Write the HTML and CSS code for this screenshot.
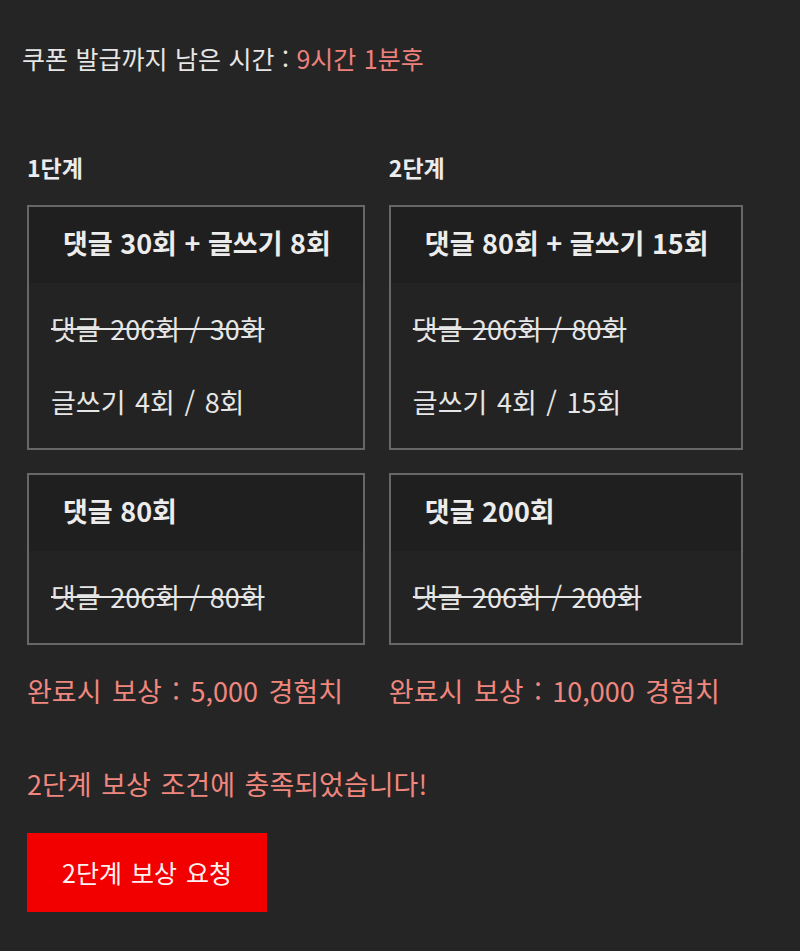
FILE: index.html
```html
<!DOCTYPE html>
<html lang="ko">
<head>
<meta charset="utf-8">
<link rel="stylesheet" href="styles.css">
</head>
<body>
<div class="page">
  <p class="timer">쿠폰 발급까지 남은 시간 : <span class="accent">9시간 1분후</span></p>
  <div class="stages">
    <div class="stage">
      <div class="stage-label">1단계</div>
      <div class="card">
        <div class="card-head">댓글 30회 + 글쓰기 8회</div>
        <div class="card-body">
          <div class="line done">댓글 206회 / 30회</div>
          <div class="line">글쓰기 4회 / 8회</div>
        </div>
      </div>
      <div class="card">
        <div class="card-head">댓글 80회</div>
        <div class="card-body">
          <div class="line done">댓글 206회 / 80회</div>
        </div>
      </div>
      <div class="reward">완료시 보상 : 5,000 경험치</div>
    </div>
    <div class="stage">
      <div class="stage-label">2단계</div>
      <div class="card">
        <div class="card-head">댓글 80회 + 글쓰기 15회</div>
        <div class="card-body">
          <div class="line done">댓글 206회 / 80회</div>
          <div class="line">글쓰기 4회 / 15회</div>
        </div>
      </div>
      <div class="card">
        <div class="card-head">댓글 200회</div>
        <div class="card-body">
          <div class="line done">댓글 206회 / 200회</div>
        </div>
      </div>
      <div class="reward">완료시 보상 : 10,000 경험치</div>
    </div>
  </div>
  <p class="message">2단계 보상 조건에 충족되었습니다!</p>
  <button class="claim" type="button">2단계 보상 요청</button>
</div>
</body>
</html>
```
FILE: styles.css
```css
html, body {
  margin: 0;
  padding: 0;
  background: #252525;
}
body {
  font-family: "Noto Sans CJK KR", "Noto Sans", sans-serif;
  color: #e6e6e6;
}
.page {
  padding: 40px 0 0 27px;
}
.timer {
  margin: 0 0 0 -5px;
  font-size: 25px;
  word-spacing: 0.5px;
  line-height: 36px;
  color: #e6e6e6;
}
.accent {
  color: #f0807c;
}
.stages {
  display: grid;
  grid-template-columns: max-content max-content;
  column-gap: 24px;
  margin-top: 76px;
}
.stage {
  display: flex;
  flex-direction: column;
}
.stage-label {
  font-size: 23px;
  font-weight: 700;
  line-height: 30px;
  margin-bottom: 23px;
  color: #ececec;
}
.card {
  border: 2px solid #676767;
  background: #232323;
  margin-bottom: 23px;
}
.card + .card {
  margin-bottom: 0;
}
.card-head {
  background: #1f1f1f;
  font-size: 27px;
  font-weight: 700;
  line-height: 72px;
  padding: 0 32px 4px 34px;
  color: #ececec;
  white-space: nowrap;
}
.card-body {
  padding: 26px 22px;
  display: flex;
  flex-direction: column;
  gap: 33px;
}
.line {
  font-size: 27px;
  word-spacing: 2px;
  line-height: 40px;
  color: #e6e6e6;
  white-space: nowrap;
}
.done {
  text-decoration: line-through;
}
.reward {
  margin-top: 26px;
  font-size: 27px;
  word-spacing: 3px;
  line-height: 40px;
  color: #f0877f;
  white-space: nowrap;
}
.message {
  margin: 53px 0 0;
  font-size: 27px;
  word-spacing: 2px;
  line-height: 40px;
  color: #f0877f;
}
.claim {
  display: block;
  margin-top: 29px;
  height: 79px;
  padding: 0 35px;
  border: none;
  background: #f20000;
  color: #fff0f0;
  font-family: "Noto Sans CJK KR", "Noto Sans", sans-serif;
  font-size: 25px;
  word-spacing: 2px;
  line-height: 79px;
}
```
